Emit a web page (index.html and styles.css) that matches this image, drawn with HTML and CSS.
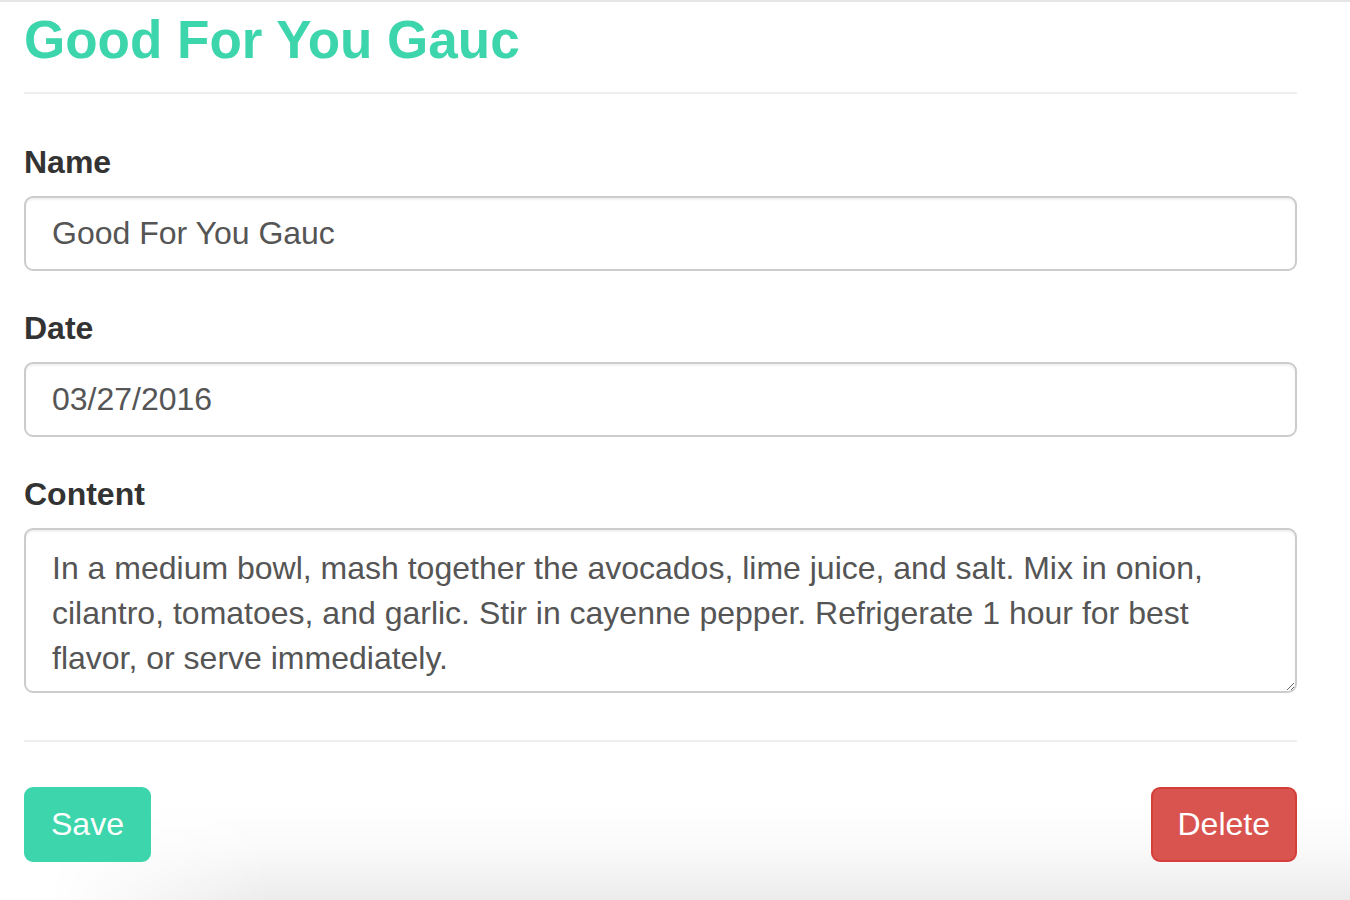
FILE: index.html
```html
<!DOCTYPE html>
<html lang="en">
<head>
<meta charset="utf-8">
<title>Good For You Gauc</title>
<link rel="stylesheet" href="styles.css">
</head>
<body>
<div class="page">
  <h1 class="title">Good For You Gauc</h1>
  <hr class="rule">
  <form class="form">
    <div class="form-group">
      <label class="label" for="name">Name</label>
      <input class="control" id="name" type="text" value="Good For You Gauc">
    </div>
    <div class="form-group">
      <label class="label" for="date">Date</label>
      <input class="control" id="date" type="text" value="03/27/2016">
    </div>
    <div class="form-group">
      <label class="label" for="content">Content</label>
      <textarea class="control textarea" id="content">In a medium bowl, mash together the avocados, lime juice, and salt. Mix in onion, cilantro, tomatoes, and garlic. Stir in cayenne pepper. Refrigerate 1 hour for best flavor, or serve immediately.</textarea>
    </div>
    <hr class="rule rule-bottom">
    <div class="actions">
      <button type="button" class="btn btn-save">Save</button>
      <button type="button" class="btn btn-delete">Delete</button>
    </div>
  </form>
</div>
<div class="window-shadow"></div>
</body>
</html>
```
FILE: styles.css
```css
html {
  margin: 0;
  padding: 0;
  background: #fff;
}
body {
  margin: 0;
  padding: 0;
  border-top: 2px solid #e6e6e6;
  font-family: "Liberation Sans", Arial, Helvetica, sans-serif;
  color: #333;
  overflow: hidden;
  height: 898px;
  position: relative;
}
.page {
  padding: 0 53px 0 24px;
}
.title {
  margin: 9px 0 23px;
  font-size: 53px;
  line-height: 58px;
  font-weight: bold;
  color: #3dd5ab;
}
.rule {
  border: 0;
  border-top: 2px solid #eeeeee;
  margin: 0 0 46px;
  height: 0;
}
.form {
  margin: 0;
}
.form-group {
  margin-bottom: 35px;
}
.label {
  display: block;
  font-size: 32px;
  line-height: 45px;
  font-weight: bold;
  color: #333;
  margin-bottom: 11px;
}
.control {
  display: block;
  box-sizing: border-box;
  width: 100%;
  height: 75px;
  margin: 0;
  padding: 0 26px;
  border: 2px solid #cccccc;
  border-radius: 9px;
  font-family: "Liberation Sans", Arial, Helvetica, sans-serif;
  font-size: 32px;
  color: #555;
  background: #fff;
  box-shadow: inset 0 2px 2px rgba(0, 0, 0, 0.06);
  outline: none;
}
.textarea {
  height: 165px;
  padding: 16px 26px 10px;
  line-height: 45px;
  resize: vertical;
  overflow: hidden;
}
.form-group:last-of-type {
  margin-bottom: 0;
}
.rule-bottom {
  margin-top: 47px;
  margin-bottom: 45px;
}
.actions {
  display: flex;
  justify-content: space-between;
}
.btn {
  height: 75px;
  padding: 0 25px;
  border: 2px solid transparent;
  border-radius: 9px;
  font-family: "Liberation Sans", Arial, Helvetica, sans-serif;
  font-size: 32px;
  color: #fff;
  cursor: pointer;
}
.btn-save {
  background: #3dd5ab;
  border-color: #3dd5ab;
}
.btn-delete {
  background: #d9534f;
  border-color: #d43f3a;
}
.window-shadow {
  position: absolute;
  left: 0;
  bottom: 0;
  width: 100%;
  height: 95px;
  z-index: -1;
  background: linear-gradient(to bottom, rgba(0, 0, 0, 0) 0%, rgba(0, 0, 0, 0.02) 45%, rgba(0, 0, 0, 0.075) 100%);
  -webkit-mask-image: linear-gradient(to right, transparent 50px, #000 270px);
  mask-image: linear-gradient(to right, transparent 50px, #000 270px);
  pointer-events: none;
}
```
